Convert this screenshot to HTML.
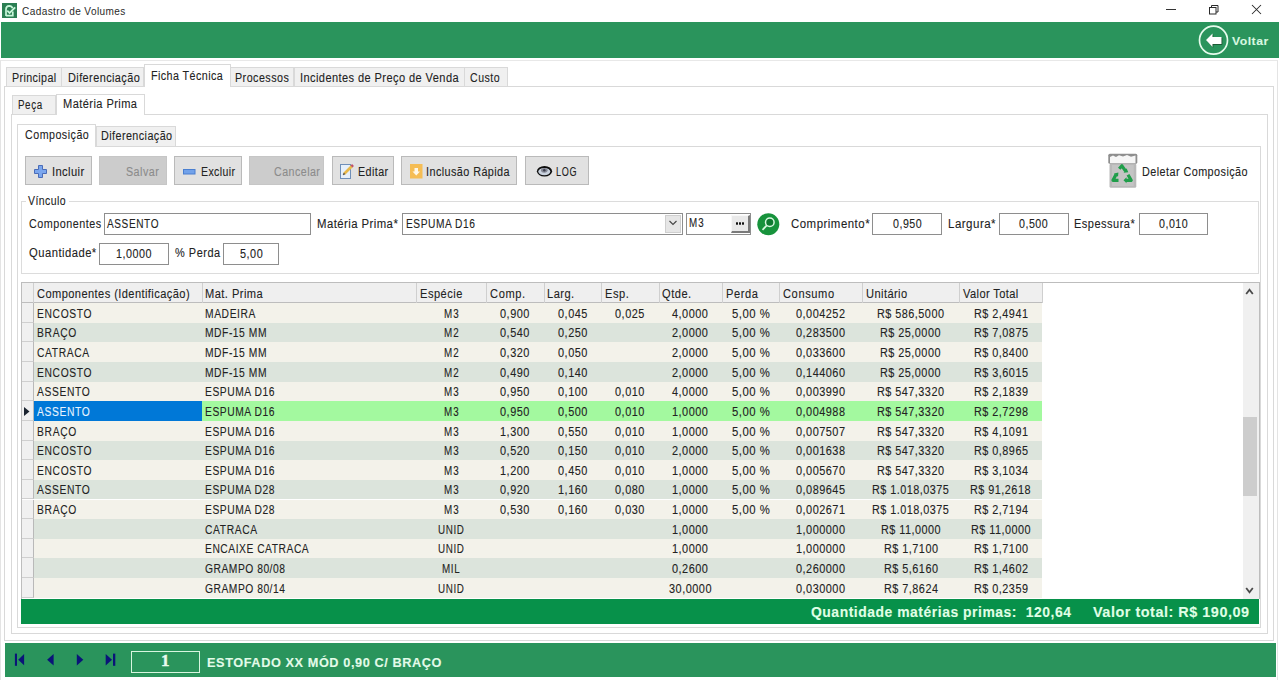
<!DOCTYPE html>
<html><head><meta charset="utf-8">
<style>
html,body{margin:0;padding:0;}
body{width:1280px;height:680px;position:relative;overflow:hidden;background:#fff;font-family:"Liberation Sans",sans-serif;color:#1f1f1f;}
.a{position:absolute;box-sizing:border-box;}
.t{position:absolute;white-space:nowrap;line-height:0;transform-origin:0 0;-webkit-text-stroke:0.1px currentColor;}
svg{position:absolute;overflow:visible;}
</style></head><body>
<svg style="left:2px;top:3px" width="15" height="15" viewBox="0 0 15 15">
<rect x="0" y="0" width="15" height="15" fill="#2b7f53"/>
<path d="M4 13 V6.3 Q4 3 7.2 2.8 Q9.8 2.9 10.6 5.2" fill="none" stroke="#c9f7da" stroke-width="1.7"/>
<path d="M4 12.6 H10.8 V8.5" fill="none" stroke="#c9f7da" stroke-width="1.7"/>
<path d="M5.3 7.6 L7.6 10 L13.2 4.3" fill="none" stroke="#c9f7da" stroke-width="1.8"/>
</svg>
<div class="t" style="left:21.9px;top:11px;font-size:11.2px;letter-spacing:0.448px;transform:scaleX(0.8980);color:#2a2a2a;-webkit-text-stroke:0;">Cadastro de Volumes</div>
<div class="a" style="left:1166px;top:9px;width:10px;height:1px;background:#333;"></div>
<svg style="left:1208px;top:4px" width="12" height="12" viewBox="0 0 12 12">
<rect x="1.5" y="3.5" width="6.5" height="6.5" fill="none" stroke="#2a2a2a" stroke-width="1"/>
<path d="M3.5 3.5 V1.5 H10 V8 H8" fill="none" stroke="#2a2a2a" stroke-width="1"/>
</svg>
<svg style="left:1251px;top:4px" width="12" height="12" viewBox="0 0 12 12">
<path d="M1 1 L10 10 M10 1 L1 10" stroke="#2a2a2a" stroke-width="1.05"/>
</svg>
<div class="a" style="left:1px;top:22px;width:1278px;height:36px;background:#2a945c;"></div>
<svg style="left:1198px;top:25px" width="31" height="31" viewBox="0 0 31 31">
<circle cx="15.5" cy="15.2" r="14" fill="none" stroke="#e6fbec" stroke-width="1.7"/>
<path d="M8 15 L14.5 8.5 L14.5 12 L23.5 12 L23.5 19 L14.5 19 L14.5 22 Z" fill="#1a4a2a" transform="translate(0.8,0.8)"/>
<path d="M8 15 L14.5 8.5 L14.5 12 L23.5 12 L23.5 19 L14.5 19 L14.5 22 Z" fill="#ffffff"/>
</svg>
<div class="t" style="left:1232.4px;top:41px;font-size:11.6px;letter-spacing:0.482px;transform:scaleX(1.0516);color:#d8f8e0;font-weight:bold;">Voltar</div>
<div class="a" style="left:0px;top:60px;width:1278px;height:620px;border-left:1px solid #e4e4e4;border-top:1px solid #e8e8e8;border-right:1px solid #e4e4e4;"></div>
<div class="a" style="left:4.2px;top:86px;width:1269.8px;height:555px;border:1px solid #d9d9d9;"></div>
<div class="a" style="left:10.5px;top:114px;width:1257.5px;height:520px;border:1px solid #d9d9d9;"></div>
<div class="a" style="left:17.3px;top:145.5px;width:1244.2px;height:482.5px;border:1px solid #d9d9d9;"></div>
<div class="a" style="left:6px;top:66.6px;width:55.5px;height:19.4px;background:#f0f0f0;border:1px solid #d9d9d9;border-bottom:none;"></div>
<div class="t" style="left:11.85px;top:78px;font-size:12.5px;letter-spacing:0.451px;transform:scaleX(0.8555);color:#222222;">Principal</div>
<div class="a" style="left:61px;top:66.6px;width:82.5px;height:19.4px;background:#f0f0f0;border:1px solid #d9d9d9;border-bottom:none;"></div>
<div class="t" style="left:67.7px;top:78px;font-size:12.5px;letter-spacing:0.479px;transform:scaleX(0.8737);color:#222222;">Diferenciação</div>
<div class="a" style="left:230px;top:66.6px;width:64px;height:19.4px;background:#f0f0f0;border:1px solid #d9d9d9;border-bottom:none;"></div>
<div class="t" style="left:235.2px;top:78px;font-size:12.5px;letter-spacing:0.549px;transform:scaleX(0.8574);color:#222222;">Processos</div>
<div class="a" style="left:293.5px;top:66.6px;width:171.0px;height:19.4px;background:#f0f0f0;border:1px solid #d9d9d9;border-bottom:none;"></div>
<div class="t" style="left:300px;top:78px;font-size:12.5px;letter-spacing:0.465px;transform:scaleX(0.8843);color:#222222;">Incidentes de Preço de Venda</div>
<div class="a" style="left:464px;top:66.6px;width:44px;height:19.4px;background:#f0f0f0;border:1px solid #d9d9d9;border-bottom:none;"></div>
<div class="t" style="left:470.3px;top:78px;font-size:12.5px;letter-spacing:0.614px;transform:scaleX(0.8459);color:#222222;">Custo</div>
<div class="a" style="left:143.5px;top:64.2px;width:87.0px;height:22.8px;background:#ffffff;border:1px solid #d9d9d9;border-bottom:none;"></div>
<div class="t" style="left:151.4px;top:76px;font-size:12.5px;letter-spacing:0.487px;transform:scaleX(0.8595);color:#222222;">Ficha Técnica</div>
<div class="a" style="left:12.2px;top:95px;width:43.8px;height:19.3px;background:#f0f0f0;border:1px solid #d9d9d9;border-bottom:none;"></div>
<div class="t" style="left:18.4px;top:105px;font-size:12.5px;letter-spacing:0.715px;transform:scaleX(0.7866);color:#222222;">Peça</div>
<div class="a" style="left:55.5px;top:93.5px;width:89.0px;height:21.8px;background:#ffffff;border:1px solid #d9d9d9;border-bottom:none;"></div>
<div class="t" style="left:63.4px;top:104px;font-size:12.5px;letter-spacing:0.488px;transform:scaleX(0.8846);color:#222222;">Matéria Prima</div>
<div class="a" style="left:95.5px;top:125.5px;width:80.5px;height:20.4px;background:#f0f0f0;border:1px solid #d9d9d9;border-bottom:none;"></div>
<div class="t" style="left:100.8px;top:136px;font-size:12.5px;letter-spacing:0.479px;transform:scaleX(0.8651);color:#222222;">Diferenciação</div>
<div class="a" style="left:17.2px;top:124.2px;width:78.4px;height:22.7px;background:#ffffff;border:1px solid #d9d9d9;border-bottom:none;"></div>
<div class="t" style="left:25px;top:135px;font-size:12.5px;letter-spacing:0.581px;transform:scaleX(0.8533);color:#222222;">Composição</div>
<div class="a" style="left:25px;top:156.3px;width:67px;height:28.7px;background:#e1e1e1;border:1px solid #bababa;"></div>
<div class="a" style="left:99.4px;top:156.3px;width:67.6px;height:28.7px;background:#cccccc;border:1px solid #c6c6c6;"></div>
<div class="a" style="left:174.4px;top:156.3px;width:67.6px;height:28.7px;background:#e1e1e1;border:1px solid #bababa;"></div>
<div class="a" style="left:249.4px;top:156.3px;width:74.6px;height:28.7px;background:#cccccc;border:1px solid #c6c6c6;"></div>
<div class="a" style="left:332px;top:156.3px;width:61.5px;height:28.7px;background:#e1e1e1;border:1px solid #bababa;"></div>
<div class="a" style="left:401.25px;top:156.3px;width:115.75px;height:28.7px;background:#e1e1e1;border:1px solid #bababa;"></div>
<div class="a" style="left:525px;top:156.3px;width:63.5px;height:28.7px;background:#e1e1e1;border:1px solid #bababa;"></div>
<svg style="left:34px;top:165px" width="13" height="13" viewBox="0 0 13 13">
<path d="M4.5 0.5 H8.5 V4.5 H12.5 V8.5 H8.5 V12.5 H4.5 V8.5 H0.5 V4.5 H4.5 Z" fill="#7aa6ee" stroke="#4a6cb8" stroke-width="1"/>
</svg>
<div class="t" style="left:52.25px;top:172px;font-size:12.5px;letter-spacing:0.418px;transform:scaleX(0.8967);color:#222222;">Incluir</div>
<div class="t" style="left:126px;top:172px;font-size:12.5px;letter-spacing:0.533px;transform:scaleX(0.8596);color:#8b8b8b;">Salvar</div>
<svg style="left:183px;top:169px" width="13" height="6" viewBox="0 0 13 6">
<rect x="0.5" y="0.5" width="11.5" height="4.5" fill="#72a2ea" stroke="#4a7fd0" stroke-width="1"/>
</svg>
<div class="t" style="left:201px;top:172px;font-size:12.5px;letter-spacing:0.471px;transform:scaleX(0.8430);color:#222222;">Excluir</div>
<div class="t" style="left:273.5px;top:172px;font-size:12.5px;letter-spacing:0.538px;transform:scaleX(0.8533);color:#8b8b8b;">Cancelar</div>
<svg style="left:340px;top:163px" width="15" height="16" viewBox="0 0 15 16">
<rect x="0.5" y="1.5" width="10" height="14" fill="#e6f0fb" stroke="#6f8fb8" stroke-width="1"/>
<path d="M4 11 L12 3" stroke="#e8b84a" stroke-width="2.6"/>
<path d="M11.5 3.5 L13 2" stroke="#c0506a" stroke-width="2.6"/>
<path d="M3.2 11.8 L4.6 10.4" stroke="#555" stroke-width="1.5"/>
</svg>
<div class="t" style="left:357.7px;top:172px;font-size:12.5px;letter-spacing:0.492px;transform:scaleX(0.8572);color:#222222;">Editar</div>
<svg style="left:409.5px;top:164px" width="13" height="15" viewBox="0 0 13 15">
<rect x="0" y="0" width="12.5" height="14.5" fill="#f5bd55"/>
<path d="M4.5 4 H8 V7.5 H10 L6.25 11.5 L2.5 7.5 H4.5 Z" fill="#fff8e8"/>
</svg>
<div class="t" style="left:425.8px;top:172px;font-size:12.5px;letter-spacing:0.482px;transform:scaleX(0.8673);color:#222222;">Inclusão Rápida</div>
<svg style="left:536px;top:165px" width="17" height="13" viewBox="0 0 17 13">
<ellipse cx="8.5" cy="6.3" rx="7.6" ry="5.3" fill="#0d0d0d"/>
<ellipse cx="8.3" cy="6.6" rx="6" ry="3.6" fill="#c9d2de"/>
<ellipse cx="8.3" cy="5.3" rx="3.3" ry="2.4" fill="#858896"/>
<circle cx="8.3" cy="5.2" r="1.2" fill="#3c3f4c"/>
</svg>
<div class="t" style="left:556.25px;top:172px;font-size:12.5px;letter-spacing:0.993px;transform:scaleX(0.7258);color:#222222;">LOG</div>
<svg style="left:1108px;top:153px" width="30" height="36" viewBox="0 0 30 36">
<rect x="0.3" y="0.7" width="29" height="10" rx="1.5" fill="#8e8e8e"/>
<path d="M2 10 V4 L5 2.5 L8 4 L11 2.2 L15 3.5 L19 2 L23 3.8 L27.5 2.5 V10 Z" fill="#f6f6f6"/>
<rect x="1.5" y="10.6" width="26.8" height="24.2" rx="1.5" fill="#b9b9b9"/>
<rect x="4" y="12" width="21.8" height="21" fill="#c4c4c4"/>
<g fill="none" stroke="#1f9e4a" stroke-width="3.2" stroke-linejoin="round">
<path d="M11.2 15.8 L13.9 12.8 L17.6 18.2"/>
<path d="M20 21.8 L23.2 27.3 L18 27.3"/>
<path d="M10.5 27.3 L5 27.3 L8 21.5"/>
</g>
<g fill="#1f9e4a">
<path d="M15.6 19.8 L20.3 19.3 L18.6 15.2 Z"/>
<path d="M18.5 24.3 L15.5 27.3 L18.5 30.3 Z"/>
<path d="M6 20.5 L10.4 19.5 L10 23.8 Z"/>
</g>
</svg>
<div class="t" style="left:1141.9px;top:172px;font-size:12.5px;letter-spacing:0.501px;transform:scaleX(0.8672);color:#222222;">Deletar Composição</div>
<div class="a" style="left:21.3px;top:201.3px;width:1238.2px;height:73.0px;border:1px solid #dcdcdc;"></div>
<div class="a" style="left:26px;top:196px;width:43px;height:10px;background:#fff;"></div>
<div class="t" style="left:28.4px;top:201px;font-size:12.5px;letter-spacing:0.523px;transform:scaleX(0.8387);color:#222222;">Vínculo</div>
<div class="t" style="left:28.8px;top:224px;font-size:12.5px;letter-spacing:0.586px;transform:scaleX(0.8627);color:#222222;">Componentes</div>
<div class="a" style="left:104.2px;top:212.8px;width:206.8px;height:21.8px;background:#fff;border:1px solid #8e8e8e;"></div>
<div class="t" style="left:107.2px;top:224px;font-size:12.5px;letter-spacing:0.747px;transform:scaleX(0.8048);color:#222222;">ASSENTO</div>
<div class="t" style="left:317.3px;top:224px;font-size:12.5px;letter-spacing:0.479px;transform:scaleX(0.9090);color:#222222;">Matéria Prima*</div>
<div class="a" style="left:402.2px;top:212.8px;width:280.8px;height:21.8px;background:#fff;border:1px solid #8e8e8e;"></div>
<div class="t" style="left:406px;top:224px;font-size:12.5px;letter-spacing:0.657px;transform:scaleX(0.8150);color:#222222;">ESPUMA D16</div>
<div class="a" style="left:665.2px;top:215px;width:16.0px;height:17.6px;background:#e6e6e6;border:1px solid #cfcfcf;"></div>
<svg style="left:668px;top:219px" width="10" height="8" viewBox="0 0 10 8">
<path d="M1.5 2 L5 5.5 L8.5 2" fill="none" stroke="#444" stroke-width="1.1"/>
</svg>
<div class="a" style="left:686.3px;top:212.8px;width:65.2px;height:21.8px;background:#fff;border:1px solid #8e8e8e;"></div>
<div class="t" style="left:688.7px;top:223px;font-size:12.5px;letter-spacing:1.307px;transform:scaleX(0.7819);color:#222222;">M3</div>
<div class="a" style="left:731.3px;top:214.9px;width:18.7px;height:18.0px;background:#e9e9e9;border-right:2px solid #7a7a7a;border-bottom:2px solid #7a7a7a;border-top:1px solid #f8f8f8;border-left:1px solid #f8f8f8;"></div>
<svg style="left:736.2px;top:222.3px" width="10" height="4" viewBox="0 0 10 4">
<rect x="0" y="0.3" width="2" height="2.4" fill="#111"/><rect x="3" y="0.3" width="2" height="2.4" fill="#111"/><rect x="6" y="0.3" width="2" height="2.4" fill="#111"/>
</svg>
<svg style="left:757px;top:213px" width="23" height="23" viewBox="0 0 23 23">
<circle cx="11.3" cy="11.2" r="11" fill="#17933c"/>
<circle cx="12.8" cy="9.3" r="4.3" fill="#0e7a30" stroke="#d8f8e0" stroke-width="1.5"/>
<path d="M9.8 12.3 L5.5 16.8" stroke="#d8f8e0" stroke-width="1.7"/>
</svg>
<div class="t" style="left:790.7px;top:224px;font-size:12.5px;letter-spacing:0.547px;transform:scaleX(0.9150);color:#222222;">Comprimento*</div>
<div class="a" style="left:872.3px;top:212.8px;width:69.5px;height:21.8px;background:#fff;border:1px solid #8e8e8e;"></div>
<div class="t" style="left:892.7px;top:224px;font-size:12.5px;letter-spacing:0.589px;transform:scaleX(0.8533);color:#222222;">0,950</div>
<div class="t" style="left:947.5px;top:224px;font-size:12.5px;letter-spacing:0.516px;transform:scaleX(0.9232);color:#222222;">Largura*</div>
<div class="a" style="left:999px;top:212.8px;width:69.5px;height:21.8px;background:#fff;border:1px solid #8e8e8e;"></div>
<div class="t" style="left:1019.4px;top:224px;font-size:12.5px;letter-spacing:0.589px;transform:scaleX(0.8533);color:#222222;">0,500</div>
<div class="t" style="left:1074.4px;top:224px;font-size:12.5px;letter-spacing:0.535px;transform:scaleX(0.8831);color:#222222;">Espessura*</div>
<div class="a" style="left:1138.5px;top:212.8px;width:69.9px;height:21.8px;background:#fff;border:1px solid #8e8e8e;"></div>
<div class="t" style="left:1159.1px;top:224px;font-size:12.5px;letter-spacing:0.589px;transform:scaleX(0.8533);color:#222222;">0,010</div>
<div class="t" style="left:28.8px;top:253px;font-size:12.5px;letter-spacing:0.523px;transform:scaleX(0.8999);color:#222222;">Quantidade*</div>
<div class="a" style="left:99.4px;top:242.8px;width:69.4px;height:21.8px;background:#fff;border:1px solid #8e8e8e;"></div>
<div class="t" style="left:116.4px;top:254px;font-size:12.5px;letter-spacing:0.576px;transform:scaleX(0.8611);color:#222222;">1,0000</div>
<div class="t" style="left:174.8px;top:253px;font-size:12.5px;letter-spacing:0.601px;transform:scaleX(0.8768);color:#222222;">% Perda</div>
<div class="a" style="left:223.2px;top:242.8px;width:56.0px;height:21.8px;background:#fff;border:1px solid #8e8e8e;"></div>
<div class="t" style="left:239.85px;top:254px;font-size:12.5px;letter-spacing:0.610px;transform:scaleX(0.8677);color:#222222;">5,00</div>
<div class="a" style="left:21px;top:282px;width:1238.5px;height:317.3px;background:#ffffff;border:1px solid #bdbdbd;border-bottom:none;"></div>
<div class="a" style="left:22px;top:283px;width:1020.3px;height:20.1px;background:#efefef;border-bottom:1px solid #bdbdbd;"></div>
<div class="a" style="left:33.4px;top:283px;width:1.0px;height:20.1px;background:#cfcfcf;"></div>
<div class="t" style="left:37.0px;top:294px;font-size:12.5px;letter-spacing:0.463px;transform:scaleX(0.8881);color:#222222;">Componentes (Identificação)</div>
<div class="a" style="left:201.7px;top:283px;width:1.0px;height:20.1px;background:#cfcfcf;"></div>
<div class="t" style="left:205.3px;top:294px;font-size:12.5px;letter-spacing:0.505px;transform:scaleX(0.8881);color:#222222;">Mat. Prima</div>
<div class="a" style="left:416.25px;top:283px;width:1.0px;height:20.1px;background:#cfcfcf;"></div>
<div class="t" style="left:419.85px;top:294px;font-size:12.5px;letter-spacing:0.558px;transform:scaleX(0.8881);color:#222222;">Espécie</div>
<div class="a" style="left:486.3px;top:283px;width:1.0px;height:20.1px;background:#cfcfcf;"></div>
<div class="t" style="left:489.9px;top:294px;font-size:12.5px;letter-spacing:0.693px;transform:scaleX(0.8881);color:#222222;">Comp.</div>
<div class="a" style="left:543.6px;top:283px;width:1.0px;height:20.1px;background:#cfcfcf;"></div>
<div class="t" style="left:547.2px;top:294px;font-size:12.5px;letter-spacing:0.536px;transform:scaleX(0.8881);color:#222222;">Larg.</div>
<div class="a" style="left:601.1px;top:283px;width:1.0px;height:20.1px;background:#cfcfcf;"></div>
<div class="t" style="left:604.7px;top:294px;font-size:12.5px;letter-spacing:0.628px;transform:scaleX(0.8881);color:#222222;">Esp.</div>
<div class="a" style="left:658.5px;top:283px;width:1.0px;height:20.1px;background:#cfcfcf;"></div>
<div class="t" style="left:662.1px;top:294px;font-size:12.5px;letter-spacing:0.575px;transform:scaleX(0.8881);color:#222222;">Qtde.</div>
<div class="a" style="left:722.1px;top:283px;width:1.0px;height:20.1px;background:#cfcfcf;"></div>
<div class="t" style="left:725.7px;top:294px;font-size:12.5px;letter-spacing:0.628px;transform:scaleX(0.8881);color:#222222;">Perda</div>
<div class="a" style="left:779.4px;top:283px;width:1.0px;height:20.1px;background:#cfcfcf;"></div>
<div class="t" style="left:783.0px;top:294px;font-size:12.5px;letter-spacing:0.671px;transform:scaleX(0.8881);color:#222222;">Consumo</div>
<div class="a" style="left:862.3px;top:283px;width:1.0px;height:20.1px;background:#cfcfcf;"></div>
<div class="t" style="left:865.9px;top:294px;font-size:12.5px;letter-spacing:0.463px;transform:scaleX(0.8881);color:#222222;">Unitário</div>
<div class="a" style="left:959.1px;top:283px;width:1.0px;height:20.1px;background:#cfcfcf;"></div>
<div class="t" style="left:962.7px;top:294px;font-size:12.5px;letter-spacing:0.436px;transform:scaleX(0.8881);color:#222222;">Valor Total</div>
<div class="a" style="left:1041.8px;top:283px;width:1.0px;height:20.1px;background:#cfcfcf;"></div>
<div class="a" style="left:22px;top:303.1px;width:12.4px;height:19.64px;background:#f0f0f0;border-bottom:1px solid #cfcfcf;border-right:1px solid #b9b9b9;"></div>
<div class="a" style="left:34.4px;top:303.1px;width:1007.9px;height:19.64px;background:#f3f2ea;"></div>
<div class="t" style="left:37.0px;top:314px;font-size:12.5px;letter-spacing:0.773px;transform:scaleX(0.8231);color:#222222;">ENCOSTO</div>
<div class="t" style="left:205.3px;top:314px;font-size:12.5px;letter-spacing:0.714px;transform:scaleX(0.8231);color:#222222;">MADEIRA</div>
<div class="t" style="left:443.94px;top:314px;font-size:12.5px;letter-spacing:1.307px;transform:scaleX(0.7859);color:#222222;">M3</div>
<div class="t" style="left:500.25px;top:314px;font-size:12.5px;letter-spacing:0.589px;transform:scaleX(0.8742);color:#222222;">0,900</div>
<div class="t" style="left:557.65px;top:314px;font-size:12.5px;letter-spacing:0.589px;transform:scaleX(0.8742);color:#222222;">0,045</div>
<div class="t" style="left:615.1px;top:314px;font-size:12.5px;letter-spacing:0.589px;transform:scaleX(0.8742);color:#222222;">0,025</div>
<div class="t" style="left:672.33px;top:314px;font-size:12.5px;letter-spacing:0.576px;transform:scaleX(0.8742);color:#222222;">4,0000</div>
<div class="t" style="left:731.78px;top:314px;font-size:12.5px;letter-spacing:0.586px;transform:scaleX(0.9068);color:#222222;">5,00 %</div>
<div class="t" style="left:796.35px;top:314px;font-size:12.5px;letter-spacing:0.561px;transform:scaleX(0.8742);color:#222222;">0,004252</div>
<div class="t" style="left:877.23px;top:314px;font-size:12.5px;letter-spacing:0.539px;transform:scaleX(0.8696);color:#222222;">R$ 586,5000</div>
<div class="t" style="left:973.73px;top:314px;font-size:12.5px;letter-spacing:0.543px;transform:scaleX(0.8696);color:#222222;">R$ 2,4941</div>
<div class="a" style="left:22px;top:322.74px;width:12.4px;height:19.64px;background:#f0f0f0;border-bottom:1px solid #cfcfcf;border-right:1px solid #b9b9b9;"></div>
<div class="a" style="left:34.4px;top:322.74px;width:1007.9px;height:19.64px;background:#dce4dc;"></div>
<div class="t" style="left:37.0px;top:333px;font-size:12.5px;letter-spacing:0.836px;transform:scaleX(0.8231);color:#222222;">BRAÇO</div>
<div class="t" style="left:205.3px;top:333px;font-size:12.5px;letter-spacing:0.653px;transform:scaleX(0.8231);color:#222222;">MDF-15 MM</div>
<div class="t" style="left:443.94px;top:333px;font-size:12.5px;letter-spacing:1.307px;transform:scaleX(0.7859);color:#222222;">M2</div>
<div class="t" style="left:500.25px;top:333px;font-size:12.5px;letter-spacing:0.589px;transform:scaleX(0.8742);color:#222222;">0,540</div>
<div class="t" style="left:557.65px;top:333px;font-size:12.5px;letter-spacing:0.589px;transform:scaleX(0.8742);color:#222222;">0,250</div>
<div class="t" style="left:672.33px;top:333px;font-size:12.5px;letter-spacing:0.576px;transform:scaleX(0.8742);color:#222222;">2,0000</div>
<div class="t" style="left:731.78px;top:333px;font-size:12.5px;letter-spacing:0.586px;transform:scaleX(0.9068);color:#222222;">5,00 %</div>
<div class="t" style="left:796.35px;top:333px;font-size:12.5px;letter-spacing:0.561px;transform:scaleX(0.8742);color:#222222;">0,283500</div>
<div class="t" style="left:880.48px;top:333px;font-size:12.5px;letter-spacing:0.541px;transform:scaleX(0.8696);color:#222222;">R$ 25,0000</div>
<div class="t" style="left:973.73px;top:333px;font-size:12.5px;letter-spacing:0.543px;transform:scaleX(0.8696);color:#222222;">R$ 7,0875</div>
<div class="a" style="left:22px;top:342.38px;width:12.4px;height:19.64px;background:#f0f0f0;border-bottom:1px solid #cfcfcf;border-right:1px solid #b9b9b9;"></div>
<div class="a" style="left:34.4px;top:342.38px;width:1007.9px;height:19.64px;background:#f3f2ea;"></div>
<div class="t" style="left:37.0px;top:353px;font-size:12.5px;letter-spacing:0.738px;transform:scaleX(0.8231);color:#222222;">CATRACA</div>
<div class="t" style="left:205.3px;top:353px;font-size:12.5px;letter-spacing:0.653px;transform:scaleX(0.8231);color:#222222;">MDF-15 MM</div>
<div class="t" style="left:443.94px;top:353px;font-size:12.5px;letter-spacing:1.307px;transform:scaleX(0.7859);color:#222222;">M2</div>
<div class="t" style="left:500.25px;top:353px;font-size:12.5px;letter-spacing:0.589px;transform:scaleX(0.8742);color:#222222;">0,320</div>
<div class="t" style="left:557.65px;top:353px;font-size:12.5px;letter-spacing:0.589px;transform:scaleX(0.8742);color:#222222;">0,050</div>
<div class="t" style="left:672.33px;top:353px;font-size:12.5px;letter-spacing:0.576px;transform:scaleX(0.8742);color:#222222;">2,0000</div>
<div class="t" style="left:731.78px;top:353px;font-size:12.5px;letter-spacing:0.586px;transform:scaleX(0.9068);color:#222222;">5,00 %</div>
<div class="t" style="left:796.35px;top:353px;font-size:12.5px;letter-spacing:0.561px;transform:scaleX(0.8742);color:#222222;">0,033600</div>
<div class="t" style="left:880.48px;top:353px;font-size:12.5px;letter-spacing:0.541px;transform:scaleX(0.8696);color:#222222;">R$ 25,0000</div>
<div class="t" style="left:973.73px;top:353px;font-size:12.5px;letter-spacing:0.543px;transform:scaleX(0.8696);color:#222222;">R$ 0,8400</div>
<div class="a" style="left:22px;top:362.02000000000004px;width:12.4px;height:19.64px;background:#f0f0f0;border-bottom:1px solid #cfcfcf;border-right:1px solid #b9b9b9;"></div>
<div class="a" style="left:34.4px;top:362.02000000000004px;width:1007.9px;height:19.64px;background:#dce4dc;"></div>
<div class="t" style="left:37.0px;top:373px;font-size:12.5px;letter-spacing:0.773px;transform:scaleX(0.8231);color:#222222;">ENCOSTO</div>
<div class="t" style="left:205.3px;top:373px;font-size:12.5px;letter-spacing:0.653px;transform:scaleX(0.8231);color:#222222;">MDF-15 MM</div>
<div class="t" style="left:443.94px;top:373px;font-size:12.5px;letter-spacing:1.307px;transform:scaleX(0.7859);color:#222222;">M2</div>
<div class="t" style="left:500.25px;top:373px;font-size:12.5px;letter-spacing:0.589px;transform:scaleX(0.8742);color:#222222;">0,490</div>
<div class="t" style="left:557.65px;top:373px;font-size:12.5px;letter-spacing:0.589px;transform:scaleX(0.8742);color:#222222;">0,140</div>
<div class="t" style="left:672.33px;top:373px;font-size:12.5px;letter-spacing:0.576px;transform:scaleX(0.8742);color:#222222;">2,0000</div>
<div class="t" style="left:731.78px;top:373px;font-size:12.5px;letter-spacing:0.586px;transform:scaleX(0.9068);color:#222222;">5,00 %</div>
<div class="t" style="left:796.35px;top:373px;font-size:12.5px;letter-spacing:0.561px;transform:scaleX(0.8742);color:#222222;">0,144060</div>
<div class="t" style="left:880.48px;top:373px;font-size:12.5px;letter-spacing:0.541px;transform:scaleX(0.8696);color:#222222;">R$ 25,0000</div>
<div class="t" style="left:973.73px;top:373px;font-size:12.5px;letter-spacing:0.543px;transform:scaleX(0.8696);color:#222222;">R$ 3,6015</div>
<div class="a" style="left:22px;top:381.66px;width:12.4px;height:19.64px;background:#f0f0f0;border-bottom:1px solid #cfcfcf;border-right:1px solid #b9b9b9;"></div>
<div class="a" style="left:34.4px;top:381.66px;width:1007.9px;height:19.64px;background:#f3f2ea;"></div>
<div class="t" style="left:37.0px;top:392px;font-size:12.5px;letter-spacing:0.747px;transform:scaleX(0.8231);color:#222222;">ASSENTO</div>
<div class="t" style="left:205.3px;top:392px;font-size:12.5px;letter-spacing:0.657px;transform:scaleX(0.8231);color:#222222;">ESPUMA D16</div>
<div class="t" style="left:443.94px;top:392px;font-size:12.5px;letter-spacing:1.307px;transform:scaleX(0.7859);color:#222222;">M3</div>
<div class="t" style="left:500.25px;top:392px;font-size:12.5px;letter-spacing:0.589px;transform:scaleX(0.8742);color:#222222;">0,950</div>
<div class="t" style="left:557.65px;top:392px;font-size:12.5px;letter-spacing:0.589px;transform:scaleX(0.8742);color:#222222;">0,100</div>
<div class="t" style="left:615.1px;top:392px;font-size:12.5px;letter-spacing:0.589px;transform:scaleX(0.8742);color:#222222;">0,010</div>
<div class="t" style="left:672.33px;top:392px;font-size:12.5px;letter-spacing:0.576px;transform:scaleX(0.8742);color:#222222;">4,0000</div>
<div class="t" style="left:731.78px;top:392px;font-size:12.5px;letter-spacing:0.586px;transform:scaleX(0.9068);color:#222222;">5,00 %</div>
<div class="t" style="left:796.35px;top:392px;font-size:12.5px;letter-spacing:0.561px;transform:scaleX(0.8742);color:#222222;">0,003990</div>
<div class="t" style="left:877.23px;top:392px;font-size:12.5px;letter-spacing:0.539px;transform:scaleX(0.8696);color:#222222;">R$ 547,3320</div>
<div class="t" style="left:973.73px;top:392px;font-size:12.5px;letter-spacing:0.543px;transform:scaleX(0.8696);color:#222222;">R$ 2,1839</div>
<div class="a" style="left:22px;top:401.3px;width:12.4px;height:19.64px;background:#f0f0f0;border-bottom:1px solid #cfcfcf;border-right:1px solid #b9b9b9;"></div>
<svg style="left:24px;top:406.8px" width="6" height="9" viewBox="0 0 6 9"><path d="M0 0 L5.5 4.5 L0 9 Z" fill="#1b2430"/></svg>
<div class="a" style="left:34.4px;top:401.3px;width:167.3px;height:19.64px;background:#0078d7;"></div>
<div class="a" style="left:201.7px;top:401.3px;width:840.6px;height:19.64px;background:#a3f99f;"></div>
<div class="t" style="left:37.0px;top:412px;font-size:12.5px;letter-spacing:0.747px;transform:scaleX(0.8231);color:#e8f4ff;">ASSENTO</div>
<div class="t" style="left:205.3px;top:412px;font-size:12.5px;letter-spacing:0.657px;transform:scaleX(0.8231);color:#222222;">ESPUMA D16</div>
<div class="t" style="left:443.94px;top:412px;font-size:12.5px;letter-spacing:1.307px;transform:scaleX(0.7859);color:#222222;">M3</div>
<div class="t" style="left:500.25px;top:412px;font-size:12.5px;letter-spacing:0.589px;transform:scaleX(0.8742);color:#222222;">0,950</div>
<div class="t" style="left:557.65px;top:412px;font-size:12.5px;letter-spacing:0.589px;transform:scaleX(0.8742);color:#222222;">0,500</div>
<div class="t" style="left:615.1px;top:412px;font-size:12.5px;letter-spacing:0.589px;transform:scaleX(0.8742);color:#222222;">0,010</div>
<div class="t" style="left:672.33px;top:412px;font-size:12.5px;letter-spacing:0.576px;transform:scaleX(0.8742);color:#222222;">1,0000</div>
<div class="t" style="left:731.78px;top:412px;font-size:12.5px;letter-spacing:0.586px;transform:scaleX(0.9068);color:#222222;">5,00 %</div>
<div class="t" style="left:796.35px;top:412px;font-size:12.5px;letter-spacing:0.561px;transform:scaleX(0.8742);color:#222222;">0,004988</div>
<div class="t" style="left:877.23px;top:412px;font-size:12.5px;letter-spacing:0.539px;transform:scaleX(0.8696);color:#222222;">R$ 547,3320</div>
<div class="t" style="left:973.73px;top:412px;font-size:12.5px;letter-spacing:0.543px;transform:scaleX(0.8696);color:#222222;">R$ 2,7298</div>
<div class="a" style="left:22px;top:420.94000000000005px;width:12.4px;height:19.64px;background:#f0f0f0;border-bottom:1px solid #cfcfcf;border-right:1px solid #b9b9b9;"></div>
<div class="a" style="left:34.4px;top:420.94000000000005px;width:1007.9px;height:19.64px;background:#f3f2ea;"></div>
<div class="t" style="left:37.0px;top:432px;font-size:12.5px;letter-spacing:0.836px;transform:scaleX(0.8231);color:#222222;">BRAÇO</div>
<div class="t" style="left:205.3px;top:432px;font-size:12.5px;letter-spacing:0.657px;transform:scaleX(0.8231);color:#222222;">ESPUMA D16</div>
<div class="t" style="left:443.94px;top:432px;font-size:12.5px;letter-spacing:1.307px;transform:scaleX(0.7859);color:#222222;">M3</div>
<div class="t" style="left:500.25px;top:432px;font-size:12.5px;letter-spacing:0.589px;transform:scaleX(0.8742);color:#222222;">1,300</div>
<div class="t" style="left:557.65px;top:432px;font-size:12.5px;letter-spacing:0.589px;transform:scaleX(0.8742);color:#222222;">0,550</div>
<div class="t" style="left:615.1px;top:432px;font-size:12.5px;letter-spacing:0.589px;transform:scaleX(0.8742);color:#222222;">0,010</div>
<div class="t" style="left:672.33px;top:432px;font-size:12.5px;letter-spacing:0.576px;transform:scaleX(0.8742);color:#222222;">1,0000</div>
<div class="t" style="left:731.78px;top:432px;font-size:12.5px;letter-spacing:0.586px;transform:scaleX(0.9068);color:#222222;">5,00 %</div>
<div class="t" style="left:796.35px;top:432px;font-size:12.5px;letter-spacing:0.561px;transform:scaleX(0.8742);color:#222222;">0,007507</div>
<div class="t" style="left:877.23px;top:432px;font-size:12.5px;letter-spacing:0.539px;transform:scaleX(0.8696);color:#222222;">R$ 547,3320</div>
<div class="t" style="left:973.73px;top:432px;font-size:12.5px;letter-spacing:0.543px;transform:scaleX(0.8696);color:#222222;">R$ 4,1091</div>
<div class="a" style="left:22px;top:440.58000000000004px;width:12.4px;height:19.64px;background:#f0f0f0;border-bottom:1px solid #cfcfcf;border-right:1px solid #b9b9b9;"></div>
<div class="a" style="left:34.4px;top:440.58000000000004px;width:1007.9px;height:19.64px;background:#dce4dc;"></div>
<div class="t" style="left:37.0px;top:451px;font-size:12.5px;letter-spacing:0.773px;transform:scaleX(0.8231);color:#222222;">ENCOSTO</div>
<div class="t" style="left:205.3px;top:451px;font-size:12.5px;letter-spacing:0.657px;transform:scaleX(0.8231);color:#222222;">ESPUMA D16</div>
<div class="t" style="left:443.94px;top:451px;font-size:12.5px;letter-spacing:1.307px;transform:scaleX(0.7859);color:#222222;">M3</div>
<div class="t" style="left:500.25px;top:451px;font-size:12.5px;letter-spacing:0.589px;transform:scaleX(0.8742);color:#222222;">0,520</div>
<div class="t" style="left:557.65px;top:451px;font-size:12.5px;letter-spacing:0.589px;transform:scaleX(0.8742);color:#222222;">0,150</div>
<div class="t" style="left:615.1px;top:451px;font-size:12.5px;letter-spacing:0.589px;transform:scaleX(0.8742);color:#222222;">0,010</div>
<div class="t" style="left:672.33px;top:451px;font-size:12.5px;letter-spacing:0.576px;transform:scaleX(0.8742);color:#222222;">2,0000</div>
<div class="t" style="left:731.78px;top:451px;font-size:12.5px;letter-spacing:0.586px;transform:scaleX(0.9068);color:#222222;">5,00 %</div>
<div class="t" style="left:796.35px;top:451px;font-size:12.5px;letter-spacing:0.561px;transform:scaleX(0.8742);color:#222222;">0,001638</div>
<div class="t" style="left:877.23px;top:451px;font-size:12.5px;letter-spacing:0.539px;transform:scaleX(0.8696);color:#222222;">R$ 547,3320</div>
<div class="t" style="left:973.73px;top:451px;font-size:12.5px;letter-spacing:0.543px;transform:scaleX(0.8696);color:#222222;">R$ 0,8965</div>
<div class="a" style="left:22px;top:460.22px;width:12.4px;height:19.64px;background:#f0f0f0;border-bottom:1px solid #cfcfcf;border-right:1px solid #b9b9b9;"></div>
<div class="a" style="left:34.4px;top:460.22px;width:1007.9px;height:19.64px;background:#f3f2ea;"></div>
<div class="t" style="left:37.0px;top:471px;font-size:12.5px;letter-spacing:0.773px;transform:scaleX(0.8231);color:#222222;">ENCOSTO</div>
<div class="t" style="left:205.3px;top:471px;font-size:12.5px;letter-spacing:0.657px;transform:scaleX(0.8231);color:#222222;">ESPUMA D16</div>
<div class="t" style="left:443.94px;top:471px;font-size:12.5px;letter-spacing:1.307px;transform:scaleX(0.7859);color:#222222;">M3</div>
<div class="t" style="left:500.25px;top:471px;font-size:12.5px;letter-spacing:0.589px;transform:scaleX(0.8742);color:#222222;">1,200</div>
<div class="t" style="left:557.65px;top:471px;font-size:12.5px;letter-spacing:0.589px;transform:scaleX(0.8742);color:#222222;">0,450</div>
<div class="t" style="left:615.1px;top:471px;font-size:12.5px;letter-spacing:0.589px;transform:scaleX(0.8742);color:#222222;">0,010</div>
<div class="t" style="left:672.33px;top:471px;font-size:12.5px;letter-spacing:0.576px;transform:scaleX(0.8742);color:#222222;">1,0000</div>
<div class="t" style="left:731.78px;top:471px;font-size:12.5px;letter-spacing:0.586px;transform:scaleX(0.9068);color:#222222;">5,00 %</div>
<div class="t" style="left:796.35px;top:471px;font-size:12.5px;letter-spacing:0.561px;transform:scaleX(0.8742);color:#222222;">0,005670</div>
<div class="t" style="left:877.23px;top:471px;font-size:12.5px;letter-spacing:0.539px;transform:scaleX(0.8696);color:#222222;">R$ 547,3320</div>
<div class="t" style="left:973.73px;top:471px;font-size:12.5px;letter-spacing:0.543px;transform:scaleX(0.8696);color:#222222;">R$ 3,1034</div>
<div class="a" style="left:22px;top:479.86px;width:12.4px;height:19.64px;background:#f0f0f0;border-bottom:1px solid #cfcfcf;border-right:1px solid #b9b9b9;"></div>
<div class="a" style="left:34.4px;top:479.86px;width:1007.9px;height:19.64px;background:#dce4dc;"></div>
<div class="t" style="left:37.0px;top:490px;font-size:12.5px;letter-spacing:0.747px;transform:scaleX(0.8231);color:#222222;">ASSENTO</div>
<div class="t" style="left:205.3px;top:490px;font-size:12.5px;letter-spacing:0.657px;transform:scaleX(0.8231);color:#222222;">ESPUMA D28</div>
<div class="t" style="left:443.94px;top:490px;font-size:12.5px;letter-spacing:1.307px;transform:scaleX(0.7859);color:#222222;">M3</div>
<div class="t" style="left:500.25px;top:490px;font-size:12.5px;letter-spacing:0.589px;transform:scaleX(0.8742);color:#222222;">0,920</div>
<div class="t" style="left:557.65px;top:490px;font-size:12.5px;letter-spacing:0.589px;transform:scaleX(0.8742);color:#222222;">1,160</div>
<div class="t" style="left:615.1px;top:490px;font-size:12.5px;letter-spacing:0.589px;transform:scaleX(0.8742);color:#222222;">0,080</div>
<div class="t" style="left:672.33px;top:490px;font-size:12.5px;letter-spacing:0.576px;transform:scaleX(0.8742);color:#222222;">1,0000</div>
<div class="t" style="left:731.78px;top:490px;font-size:12.5px;letter-spacing:0.586px;transform:scaleX(0.9068);color:#222222;">5,00 %</div>
<div class="t" style="left:796.35px;top:490px;font-size:12.5px;letter-spacing:0.561px;transform:scaleX(0.8742);color:#222222;">0,089645</div>
<div class="t" style="left:872.36px;top:490px;font-size:12.5px;letter-spacing:0.514px;transform:scaleX(0.8696);color:#222222;">R$ 1.018,0375</div>
<div class="t" style="left:970.48px;top:490px;font-size:12.5px;letter-spacing:0.541px;transform:scaleX(0.8696);color:#222222;">R$ 91,2618</div>
<div class="a" style="left:22px;top:499.5px;width:12.4px;height:19.64px;background:#f0f0f0;border-bottom:1px solid #cfcfcf;border-right:1px solid #b9b9b9;"></div>
<div class="a" style="left:34.4px;top:499.5px;width:1007.9px;height:19.64px;background:#f3f2ea;"></div>
<div class="t" style="left:37.0px;top:510px;font-size:12.5px;letter-spacing:0.836px;transform:scaleX(0.8231);color:#222222;">BRAÇO</div>
<div class="t" style="left:205.3px;top:510px;font-size:12.5px;letter-spacing:0.657px;transform:scaleX(0.8231);color:#222222;">ESPUMA D28</div>
<div class="t" style="left:443.94px;top:510px;font-size:12.5px;letter-spacing:1.307px;transform:scaleX(0.7859);color:#222222;">M3</div>
<div class="t" style="left:500.25px;top:510px;font-size:12.5px;letter-spacing:0.589px;transform:scaleX(0.8742);color:#222222;">0,530</div>
<div class="t" style="left:557.65px;top:510px;font-size:12.5px;letter-spacing:0.589px;transform:scaleX(0.8742);color:#222222;">0,160</div>
<div class="t" style="left:615.1px;top:510px;font-size:12.5px;letter-spacing:0.589px;transform:scaleX(0.8742);color:#222222;">0,030</div>
<div class="t" style="left:672.33px;top:510px;font-size:12.5px;letter-spacing:0.576px;transform:scaleX(0.8742);color:#222222;">1,0000</div>
<div class="t" style="left:731.78px;top:510px;font-size:12.5px;letter-spacing:0.586px;transform:scaleX(0.9068);color:#222222;">5,00 %</div>
<div class="t" style="left:796.35px;top:510px;font-size:12.5px;letter-spacing:0.561px;transform:scaleX(0.8742);color:#222222;">0,002671</div>
<div class="t" style="left:872.36px;top:510px;font-size:12.5px;letter-spacing:0.514px;transform:scaleX(0.8696);color:#222222;">R$ 1.018,0375</div>
<div class="t" style="left:973.73px;top:510px;font-size:12.5px;letter-spacing:0.543px;transform:scaleX(0.8696);color:#222222;">R$ 2,7194</div>
<div class="a" style="left:22px;top:519.1400000000001px;width:12.4px;height:19.64px;background:#f0f0f0;border-bottom:1px solid #cfcfcf;border-right:1px solid #b9b9b9;"></div>
<div class="a" style="left:34.4px;top:519.1400000000001px;width:1007.9px;height:19.64px;background:#dce4dc;"></div>
<div class="t" style="left:205.3px;top:530px;font-size:12.5px;letter-spacing:0.738px;transform:scaleX(0.8231);color:#222222;">CATRACA</div>
<div class="t" style="left:438.37px;top:530px;font-size:12.5px;letter-spacing:0.767px;transform:scaleX(0.7859);color:#222222;">UNID</div>
<div class="t" style="left:672.33px;top:530px;font-size:12.5px;letter-spacing:0.576px;transform:scaleX(0.8742);color:#222222;">1,0000</div>
<div class="t" style="left:796.35px;top:530px;font-size:12.5px;letter-spacing:0.561px;transform:scaleX(0.8742);color:#222222;">1,000000</div>
<div class="t" style="left:880.92px;top:530px;font-size:12.5px;letter-spacing:0.533px;transform:scaleX(0.8696);color:#222222;">R$ 11,0000</div>
<div class="t" style="left:970.92px;top:530px;font-size:12.5px;letter-spacing:0.533px;transform:scaleX(0.8696);color:#222222;">R$ 11,0000</div>
<div class="a" style="left:22px;top:538.78px;width:12.4px;height:19.64px;background:#f0f0f0;border-bottom:1px solid #cfcfcf;border-right:1px solid #b9b9b9;"></div>
<div class="a" style="left:34.4px;top:538.78px;width:1007.9px;height:19.64px;background:#f3f2ea;"></div>
<div class="t" style="left:205.3px;top:549px;font-size:12.5px;letter-spacing:0.630px;transform:scaleX(0.8231);color:#222222;">ENCAIXE CATRACA</div>
<div class="t" style="left:438.37px;top:549px;font-size:12.5px;letter-spacing:0.767px;transform:scaleX(0.7859);color:#222222;">UNID</div>
<div class="t" style="left:672.33px;top:549px;font-size:12.5px;letter-spacing:0.576px;transform:scaleX(0.8742);color:#222222;">1,0000</div>
<div class="t" style="left:796.35px;top:549px;font-size:12.5px;letter-spacing:0.561px;transform:scaleX(0.8742);color:#222222;">1,000000</div>
<div class="t" style="left:883.73px;top:549px;font-size:12.5px;letter-spacing:0.543px;transform:scaleX(0.8696);color:#222222;">R$ 1,7100</div>
<div class="t" style="left:973.73px;top:549px;font-size:12.5px;letter-spacing:0.543px;transform:scaleX(0.8696);color:#222222;">R$ 1,7100</div>
<div class="a" style="left:22px;top:558.4200000000001px;width:12.4px;height:19.64px;background:#f0f0f0;border-bottom:1px solid #cfcfcf;border-right:1px solid #b9b9b9;"></div>
<div class="a" style="left:34.4px;top:558.4200000000001px;width:1007.9px;height:19.64px;background:#dce4dc;"></div>
<div class="t" style="left:205.3px;top:569px;font-size:12.5px;letter-spacing:0.618px;transform:scaleX(0.8231);color:#222222;">GRAMPO 80/08</div>
<div class="t" style="left:442.47px;top:569px;font-size:12.5px;letter-spacing:0.784px;transform:scaleX(0.7859);color:#222222;">MIL</div>
<div class="t" style="left:672.33px;top:569px;font-size:12.5px;letter-spacing:0.576px;transform:scaleX(0.8742);color:#222222;">0,2600</div>
<div class="t" style="left:796.35px;top:569px;font-size:12.5px;letter-spacing:0.561px;transform:scaleX(0.8742);color:#222222;">0,260000</div>
<div class="t" style="left:883.73px;top:569px;font-size:12.5px;letter-spacing:0.543px;transform:scaleX(0.8696);color:#222222;">R$ 5,6160</div>
<div class="t" style="left:973.73px;top:569px;font-size:12.5px;letter-spacing:0.543px;transform:scaleX(0.8696);color:#222222;">R$ 1,4602</div>
<div class="a" style="left:22px;top:578.0600000000001px;width:12.4px;height:19.64px;background:#f0f0f0;border-bottom:1px solid #cfcfcf;border-right:1px solid #b9b9b9;"></div>
<div class="a" style="left:34.4px;top:578.0600000000001px;width:1007.9px;height:19.64px;background:#f3f2ea;"></div>
<div class="t" style="left:205.3px;top:589px;font-size:12.5px;letter-spacing:0.618px;transform:scaleX(0.8231);color:#222222;">GRAMPO 80/14</div>
<div class="t" style="left:438.37px;top:589px;font-size:12.5px;letter-spacing:0.767px;transform:scaleX(0.7859);color:#222222;">UNID</div>
<div class="t" style="left:669.06px;top:589px;font-size:12.5px;letter-spacing:0.567px;transform:scaleX(0.8742);color:#222222;">30,0000</div>
<div class="t" style="left:796.35px;top:589px;font-size:12.5px;letter-spacing:0.561px;transform:scaleX(0.8742);color:#222222;">0,030000</div>
<div class="t" style="left:883.73px;top:589px;font-size:12.5px;letter-spacing:0.543px;transform:scaleX(0.8696);color:#222222;">R$ 7,8624</div>
<div class="t" style="left:973.73px;top:589px;font-size:12.5px;letter-spacing:0.543px;transform:scaleX(0.8696);color:#222222;">R$ 0,2359</div>
<div class="a" style="left:1242.5px;top:283px;width:16.0px;height:316.3px;background:#f0f0f0;"></div>
<div class="a" style="left:1242.6px;top:417px;width:14.1px;height:78.8px;background:#cdcdcd;"></div>
<svg style="left:1245px;top:288px" width="10" height="8" viewBox="0 0 10 8"><path d="M1.2 6 L4.5 1.8 L7.8 6" fill="none" stroke="#4a4a4a" stroke-width="1.8"/></svg>
<svg style="left:1245px;top:586px" width="10" height="8" viewBox="0 0 10 8"><path d="M1.2 2 L4.5 6.2 L7.8 2" fill="none" stroke="#4a4a4a" stroke-width="1.8"/></svg>
<div class="a" style="left:20.8px;top:599.3px;width:1238.4px;height:25.0px;background:#07914a;"></div>
<div class="t" style="left:811px;top:612px;font-size:14.5px;letter-spacing:0.558px;transform:scaleX(0.9586);color:#e0ffe6;font-weight:bold;">Quantidade matérias primas:&nbsp; 120,64</div>
<div class="t" style="left:1093px;top:612px;font-size:14.5px;letter-spacing:0.523px;transform:scaleX(0.9946);color:#e0ffe6;font-weight:bold;">Valor total: R$ 190,09</div>
<div class="a" style="left:4.8px;top:642.6px;width:1271.2px;height:34.6px;background:#2a945c;"></div>
<svg style="left:14px;top:653px" width="104" height="14" viewBox="0 0 104 14">
<g fill="#0a1478">
<rect x="0.9" y="0.6" width="2.1" height="12.2"/><path d="M4.2 6.7 L10.1 0.9 L10.1 12.3 Z"/>
<path d="M33.1 6.7 L39.6 0.9 L39.6 12.4 Z"/>
<path d="M69.3 6.7 L62.8 0.9 L62.8 12.4 Z"/>
<path d="M98 6.7 L91.7 0.9 L91.7 12.4 Z"/><rect x="99" y="0.6" width="2.3" height="12.2"/>
</g></svg>
<div class="a" style="left:131px;top:651.2px;width:68.7px;height:21.8px;border:1.5px solid #d8f5df;"></div>
<div style="position:absolute;white-space:nowrap;left:131px;width:68.7px;text-align:center;top:652.3px;font-size:17px;line-height:1;font-family:'Liberation Serif',serif;font-weight:bold;color:#e8fbee;-webkit-text-stroke:0.4px #e8fbee;">1</div>
<div class="t" style="left:206.8px;top:663px;font-size:12px;letter-spacing:0.553px;transform:scaleX(1.0591);color:#e3fbe9;font-weight:bold;">ESTOFADO XX MÓD 0,90 C/ BRAÇO</div>
</body></html>
